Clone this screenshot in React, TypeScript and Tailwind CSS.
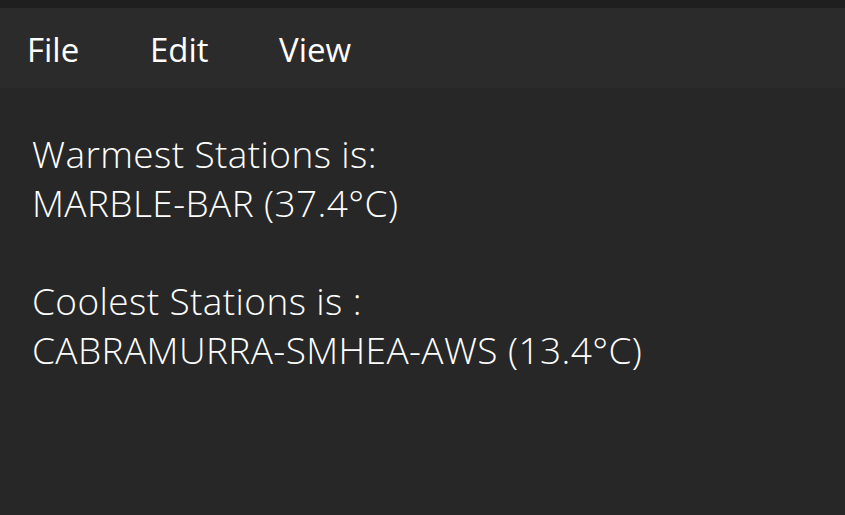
export default function App() {
  return (
    <div
      className="w-[845px] h-[515px] bg-[#272727] text-white flex flex-col overflow-hidden"
      style={{ fontFamily: '"Open Sans", "Noto Sans", sans-serif' }}
    >
      <div className="h-[8px] bg-[#1f1f1f]" />
      <div className="h-[80px] bg-[#2b2b2b] flex items-center pl-[27px] pt-[4px] text-[33px]">
        <span className="w-[123px]">File</span>
        <span className="w-[129px]">Edit</span>
        <span>View</span>
      </div>
      <div className="pt-[41px] pl-[32px] text-[37px] leading-[49px] font-light tracking-[0.4px]">
        <div>Warmest Stations is:</div>
        <div>MARBLE-BAR (37.4°C)</div>
        <div className="h-[49px]" />
        <div>Coolest Stations is :</div>
        <div>CABRAMURRA-SMHEA-AWS (13.4°C)</div>
      </div>
    </div>
  );
}
